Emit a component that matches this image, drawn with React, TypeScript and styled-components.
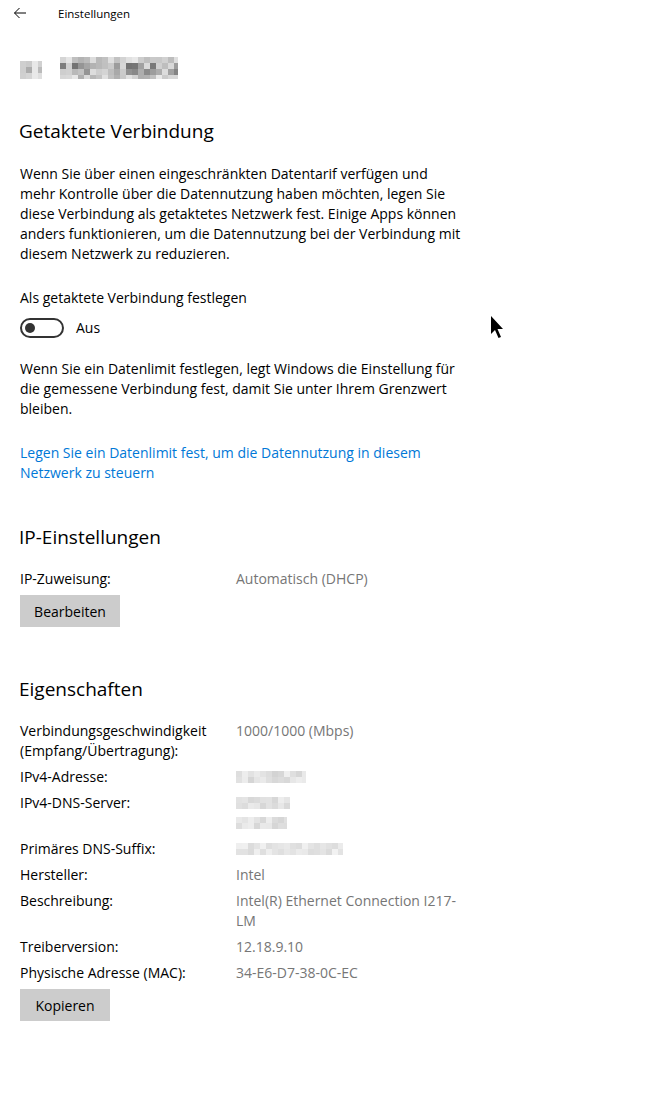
import React from "react";
import styled, { createGlobalStyle } from "styled-components";

const GlobalStyle = createGlobalStyle`
  html, body {
    margin: 0;
    padding: 0;
    background: #ffffff;
  }
  body {
    font-family: "Open Sans", "Noto Sans", "Liberation Sans", sans-serif;
    color: #000000;
  }
`;

const Page = styled.div`
  position: relative;
  width: 660px;
  min-height: 1101px;
  background: #ffffff;
`;

const TitleBar = styled.div`
  display: flex;
  align-items: center;
  height: 26px;
  padding-left: 13px;
  font-size: 11.5px;

  svg {
    margin-right: 31px;
  }
`;

const Content = styled.div`
  padding: 31px 0 40px 20px;
  width: 445px;
`;

const Heading = styled.h2<{ $top: number }>`
  margin: ${(p) => p.$top}px 0 0 -1px;
  font-size: 19px;
  line-height: 28px;
  font-weight: 400;
`;

const Text = styled.p<{ $top: number }>`
  margin: ${(p) => p.$top}px 0 0;
  font-size: 14px;
  line-height: 20px;
`;

const Link = styled(Text).attrs({ as: "a" })`
  display: block;
  color: #0078d7;
  text-decoration: none;
`;

const ToggleRow = styled.div`
  display: flex;
  align-items: center;
  gap: 12px;
  margin-top: 10px;
  font-size: 14px;
  line-height: 20px;
`;

const Track = styled.div`
  box-sizing: border-box;
  width: 44px;
  height: 20px;
  border: 2px solid #333333;
  border-radius: 10px;
  display: flex;
  align-items: center;
  padding-left: 3px;
`;

const Knob = styled.div`
  width: 10px;
  height: 10px;
  border-radius: 50%;
  background: #333333;
`;

const Button = styled.button<{ $width: number }>`
  display: block;
  width: ${(p) => p.$width}px;
  height: 32px;
  margin-top: 6px;
  border: none;
  background: #cccccc;
  font-family: inherit;
  font-size: 14px;
  color: #000000;
  padding: 0;
`;

const PropList = styled.div<{ $top: number }>`
  display: grid;
  grid-template-columns: 216px 230px;
  row-gap: 6px;
  margin-top: ${(p) => p.$top}px;
  font-size: 14px;
  line-height: 20px;
`;

const Label = styled.div``;

const Value = styled.div`
  color: #767676;
  display: flex;
  flex-direction: column;
`;

const Cursor = styled.svg`
  position: absolute;
  left: 490px;
  top: 315px;
`;

function BackArrow() {
  return (
    <svg width="14" height="12" viewBox="0 0 14 12">
      <path d="M13 6H1.5M6.5 1L1.5 6l5 5" fill="none" stroke="#000" strokeWidth="1" />
    </svg>
  );
}

// pixelated placeholder for the blurred values
function Mosaic({
  width,
  height,
  cell,
  seed,
  light,
  dark,
}: {
  width: number;
  height: number;
  cell: number;
  seed: number;
  light: number;
  dark: number;
}) {
  const cols = Math.ceil(width / cell);
  const rows = Math.ceil(height / cell);
  let s = seed;
  const rand = () => {
    s = (s * 9301 + 49297) % 233280;
    return s / 233280;
  };
  const rects = [];
  for (let r = 0; r < rows; r++) {
    for (let c = 0; c < cols; c++) {
      const edge = r === 0 || r === rows - 1;
      const v = Math.round(dark + (light - dark) * (edge ? 0.5 + rand() * 0.5 : rand()));
      rects.push(
        <rect key={r + "-" + c} x={c * cell} y={r * cell} width={cell} height={cell} fill={`rgb(${v},${v},${v})`} />
      );
    }
  }
  return (
    <svg width={width} height={height} style={{ display: "block" }}>
      {rects}
    </svg>
  );
}

const MosaicTitle = styled.div`
  display: flex;
  gap: 18px;
  height: 22px;
  align-items: flex-end;
`;

const MosaicCell = styled.div`
  display: flex;
  align-items: center;
  height: 20px;
`;

export default function App() {
  return (
    <Page>
      <GlobalStyle />
      <TitleBar>
        <BackArrow />
        Einstellungen
      </TitleBar>
      <Content>
        <MosaicTitle>
          <Mosaic width={22} height={18} cell={6} seed={3} light={235} dark={150} />
          <Mosaic width={118} height={22} cell={6} seed={11} light={235} dark={110} />
        </MosaicTitle>

        <Heading $top={38}>Getaktete Verbindung</Heading>
        <Text $top={19}>
          Wenn Sie über einen eingeschränkten Datentarif verfügen und mehr Kontrolle über die
          Datennutzung haben möchten, legen Sie diese Verbindung als getaktetes Netzwerk fest.
          Einige Apps können anders funktionieren, um die Datennutzung bei der Verbindung mit
          diesem Netzwerk zu reduzieren.
        </Text>
        <Text $top={24}>Als getaktete Verbindung festlegen</Text>
        <ToggleRow>
          <Track>
            <Knob />
          </Track>
          Aus
        </ToggleRow>
        <Text $top={21}>
          Wenn Sie ein Datenlimit festlegen, legt Windows die Einstellung für die gemessene
          Verbindung fest, damit Sie unter Ihrem Grenzwert bleiben.
        </Text>
        <Link $top={24}>
          Legen Sie ein Datenlimit fest, um die Datennutzung in diesem Netzwerk zu steuern
        </Link>

        <Heading $top={40}>IP-Einstellungen</Heading>
        <PropList $top={18}>
          <Label>IP-Zuweisung:</Label>
          <Value>Automatisch (DHCP)</Value>
        </PropList>
        <Button $width={100}>Bearbeiten</Button>

        <Heading $top={48}>Eigenschaften</Heading>
        <PropList $top={18}>
          <Label>Verbindungsgeschwindigkeit (Empfang/Übertragung):</Label>
          <Value>1000/1000 (Mbps)</Value>
          <Label>IPv4-Adresse:</Label>
          <Value>
            <MosaicCell>
              <Mosaic width={70} height={12} cell={6} seed={5} light={240} dark={180} />
            </MosaicCell>
          </Value>
          <Label>IPv4-DNS-Server:</Label>
          <Value>
            <MosaicCell>
              <Mosaic width={54} height={12} cell={6} seed={7} light={240} dark={185} />
            </MosaicCell>
            <MosaicCell>
              <Mosaic width={51} height={12} cell={6} seed={13} light={240} dark={185} />
            </MosaicCell>
          </Value>
          <Label>Primäres DNS-Suffix:</Label>
          <Value>
            <MosaicCell>
              <Mosaic width={107} height={12} cell={6} seed={17} light={242} dark={195} />
            </MosaicCell>
          </Value>
          <Label>Hersteller:</Label>
          <Value>Intel</Value>
          <Label>Beschreibung:</Label>
          <Value>Intel(R) Ethernet Connection I217-LM</Value>
          <Label>Treiberversion:</Label>
          <Value>12.18.9.10</Value>
          <Label>Physische Adresse (MAC):</Label>
          <Value>34-E6-D7-38-0C-EC</Value>
        </PropList>
        <Button $width={90}>Kopieren</Button>
      </Content>

      <Cursor width="14" height="26" viewBox="0 0 14 26">
        <path d="M1 1V19L5 15L8.5 23L11 22L7.5 14H13Z" fill="#000" />
      </Cursor>
    </Page>
  );
}
